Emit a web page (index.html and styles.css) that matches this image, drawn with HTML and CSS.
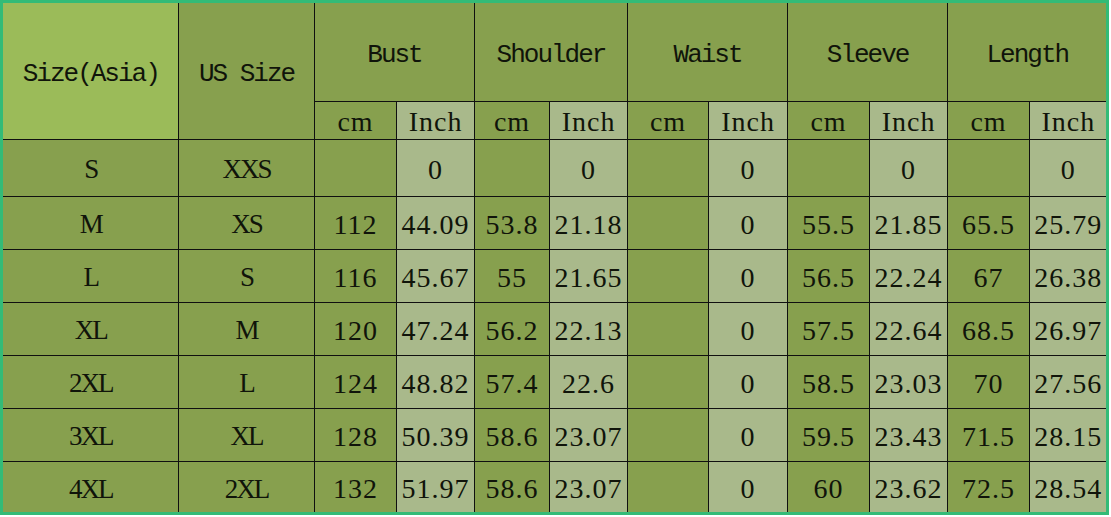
FILE: index.html
```html
<!DOCTYPE html>
<html>
<head>
<meta charset="utf-8">
<link rel="stylesheet" href="styles.css">
</head>
<body>
<div class="frame">
<table class="size-table">
  <colgroup>
    <col class="c-asia"><col class="c-us">
    <col class="c1"><col class="c2"><col class="c3"><col class="c4"><col class="c5">
    <col class="c6"><col class="c7"><col class="c8"><col class="c9"><col class="c10">
  </colgroup>
  <thead>
    <tr class="h1">
      <th rowspan="2" class="asia">Size(Asia)</th>
      <th rowspan="2" class="dark">US Size</th>
      <th colspan="2" class="dark">Bust</th>
      <th colspan="2" class="dark">Shoulder</th>
      <th colspan="2" class="dark">Waist</th>
      <th colspan="2" class="dark">Sleeve</th>
      <th colspan="2" class="dark">Length</th>
    </tr>
    <tr class="h2">
      <th class="dark">cm</th><th class="light">Inch</th>
      <th class="dark">cm</th><th class="light">Inch</th>
      <th class="dark">cm</th><th class="light">Inch</th>
      <th class="dark">cm</th><th class="light">Inch</th>
      <th class="dark">cm</th><th class="light">Inch</th>
    </tr>
  </thead>
  <tbody>
    <tr class="r-s">
      <td class="dark sz">S</td><td class="dark sz">XXS</td>
      <td class="dark"></td><td class="light">0</td>
      <td class="dark"></td><td class="light">0</td>
      <td class="dark"></td><td class="light">0</td>
      <td class="dark"></td><td class="light">0</td>
      <td class="dark"></td><td class="light">0</td>
    </tr>
    <tr>
      <td class="dark sz">M</td><td class="dark sz">XS</td>
      <td class="dark">112</td><td class="light">44.09</td>
      <td class="dark">53.8</td><td class="light">21.18</td>
      <td class="dark"></td><td class="light">0</td>
      <td class="dark">55.5</td><td class="light">21.85</td>
      <td class="dark">65.5</td><td class="light">25.79</td>
    </tr>
    <tr>
      <td class="dark sz">L</td><td class="dark sz">S</td>
      <td class="dark">116</td><td class="light">45.67</td>
      <td class="dark">55</td><td class="light">21.65</td>
      <td class="dark"></td><td class="light">0</td>
      <td class="dark">56.5</td><td class="light">22.24</td>
      <td class="dark">67</td><td class="light">26.38</td>
    </tr>
    <tr>
      <td class="dark sz">XL</td><td class="dark sz">M</td>
      <td class="dark">120</td><td class="light">47.24</td>
      <td class="dark">56.2</td><td class="light">22.13</td>
      <td class="dark"></td><td class="light">0</td>
      <td class="dark">57.5</td><td class="light">22.64</td>
      <td class="dark">68.5</td><td class="light">26.97</td>
    </tr>
    <tr>
      <td class="dark sz">2XL</td><td class="dark sz">L</td>
      <td class="dark">124</td><td class="light">48.82</td>
      <td class="dark">57.4</td><td class="light">22.6</td>
      <td class="dark"></td><td class="light">0</td>
      <td class="dark">58.5</td><td class="light">23.03</td>
      <td class="dark">70</td><td class="light">27.56</td>
    </tr>
    <tr>
      <td class="dark sz">3XL</td><td class="dark sz">XL</td>
      <td class="dark">128</td><td class="light">50.39</td>
      <td class="dark">58.6</td><td class="light">23.07</td>
      <td class="dark"></td><td class="light">0</td>
      <td class="dark">59.5</td><td class="light">23.43</td>
      <td class="dark">71.5</td><td class="light">28.15</td>
    </tr>
    <tr class="r-last">
      <td class="dark sz">4XL</td><td class="dark sz">2XL</td>
      <td class="dark">132</td><td class="light">51.97</td>
      <td class="dark">58.6</td><td class="light">23.07</td>
      <td class="dark"></td><td class="light">0</td>
      <td class="dark">60</td><td class="light">23.62</td>
      <td class="dark">72.5</td><td class="light">28.54</td>
    </tr>
  </tbody>
</table>
</div>
</body>
</html>
```

FILE: styles.css
```css
html, body {
  margin: 0;
  padding: 0;
  background: #ffffff;
}

.frame {
  width: 1103px;
  height: 509px;
  border: 3px solid #33bb77;
  background: #87a04e;
  overflow: hidden;
}

.size-table {
  width: 1103px;
  table-layout: fixed;
  border-collapse: collapse;
  border-style: hidden;
  font-family: "Liberation Serif", "DejaVu Serif", serif;
  font-size: 28px;
  letter-spacing: 1px;
  color: #10140a;
}

.c-asia { width: 175px; }
.c-us { width: 136px; }
.c1 { width: 82px; }
.c2 { width: 78px; }
.c3 { width: 75px; }
.c4 { width: 78px; }
.c5 { width: 81px; }
.c6 { width: 79px; }
.c7 { width: 82px; }
.c8 { width: 78px; }
.c9 { width: 82px; }
.c10 { width: 77px; }

.size-table th,
.size-table td {
  border: 1px solid #101010;
  padding: 4px 0 0 1px;
  text-align: center;
  vertical-align: middle;
  font-weight: normal;
  white-space: nowrap;
  overflow: hidden;
}

.size-table .sz {
  font-size: 27px;
  letter-spacing: -2px;
}

.h1 th {
  font-family: "Liberation Mono", "DejaVu Sans Mono", monospace;
  font-size: 26px;
  letter-spacing: -2px;
  padding-top: 6px;
}

.h1 { height: 98px; }
.h2 { height: 38px; }
.r-s { height: 57px; }
tbody tr { height: 53px; }
.r-last { height: 52px; }

.asia { background: #9bbb59; }
.dark { background: #87a04e; }
.light { background: #a9b98b; }
```
